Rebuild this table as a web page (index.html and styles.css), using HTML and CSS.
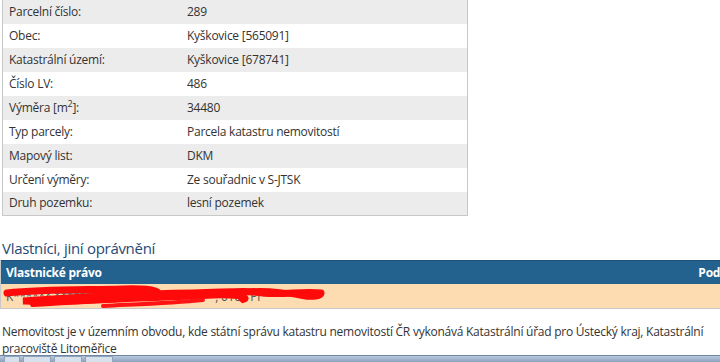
FILE: index.html
```html
<!DOCTYPE html>
<html lang="cs">
<head>
<meta charset="utf-8">
<link rel="stylesheet" href="styles.css">
</head>
<body>
<div class="page">
  <table class="info">
    <tr class="odd"><td class="lbl">Parcelní číslo:</td><td>289</td></tr>
    <tr><td class="lbl">Obec:</td><td>Kyškovice [565091]</td></tr>
    <tr class="odd"><td class="lbl">Katastrální území:</td><td>Kyškovice [678741]</td></tr>
    <tr><td class="lbl">Číslo LV:</td><td>486</td></tr>
    <tr class="odd"><td class="lbl">Výměra [m<sup>2</sup>]:</td><td>34480</td></tr>
    <tr><td class="lbl">Typ parcely:</td><td>Parcela katastru nemovitostí</td></tr>
    <tr class="odd"><td class="lbl">Mapový list:</td><td>DKM</td></tr>
    <tr><td class="lbl">Určení výměry:</td><td>Ze souřadnic v S-JTSK</td></tr>
    <tr class="odd"><td class="lbl">Druh pozemku:</td><td>lesní pozemek</td></tr>
  </table>

  <h2 class="heading">Vlastníci, jiní oprávnění</h2>
  <div class="owners">
    <div class="owners-head"><span>Vlastnické právo</span><span class="share">Podíl</span></div>
    <div class="owners-row">
      <span class="owner-text">K****** ****** ***, 13*** ****** ***, 0100 Pr*****</span>
      <svg class="scribble" width="330" height="26" viewBox="0 0 330 26">
        <path d="M4 9 C40 5 80 6 120 5 C150 4 170 9 140 12 C110 16 60 18 20 17 C60 14 120 10 190 9 C230 8 240 6 260 9 C280 11 300 7 318 9" stroke="#ff0a0a" stroke-width="7" fill="none" stroke-linecap="round"/>
        <path d="M30 20 C90 16 150 14 200 12 C230 10 250 13 240 16 C225 6 260 4 300 12 C310 14 318 12 318 10" stroke="#ff0a0a" stroke-width="6" fill="none" stroke-linecap="round"/>
        <path d="M100 22 C140 20 170 19 200 16" stroke="#ff1414" stroke-width="4" fill="none" stroke-linecap="round"/>
      </svg>
    </div>
  </div>

  <p class="note">Nemovitost je v územním obvodu, kde státní správu katastru nemovitostí ČR vykonává Katastrální úřad pro Ústecký kraj, Katastrální pracoviště Litoměřice</p>
</div>
<div class="taskbar">
  <span class="tb-btn start"></span>
  <span class="tb-btn"></span>
  <span class="tb-btn"></span>
  <span class="tb-btn"></span>
</div>
</body>
</html>
```

FILE: styles.css
```css
html, body {
  margin: 0;
  padding: 0;
  background: #fff;
  overflow: hidden;
}
body {
  width: 720px;
  height: 362px;
  font-family: "Open Sans", "Noto Sans", sans-serif;
  font-size: 12px;
  letter-spacing: -0.25px;
  color: #333;
  position: relative;
}
.page {
  height: 356px;
  overflow: hidden;
}
.info {
  margin: -1px 0 0 2px;
  width: 466px;
  border-collapse: collapse;
  border: 1px solid #c8c8c8;
}
.info tr { height: 24px; background: #fff; }
.info tr.odd { background: #ececec; }
.info td {
  padding: 0 0 0 6px;
  vertical-align: middle;
  line-height: 16px;
  white-space: nowrap;
}
.info td.lbl { width: 172px; }
.info sup { font-size: 9px; line-height: 0; }

.heading {
  margin: 21px 0 0 2px;
  font-size: 15px;
  letter-spacing: -0.3px;
  font-weight: normal;
  color: #1f4b75;
  line-height: 22px;
  height: 23px;
}
.owners {
  border-left: 1px solid #c8c8c8;
  width: 740px;
}
.owners-head {
  background: #23618f;
  color: #fff;
  font-weight: bold;
  height: 23px;
  display: flex;
  align-items: center;
  padding-left: 5px;
  border-top: 1px solid #1b4f78;
}
.owners-head .share { margin-left: auto; margin-right: 14px; }
.owners-row {
  background: #fcdcb0;
  height: 24px;
  border-bottom: 1px solid #c8c8c8;
  position: relative;
  display: flex;
  align-items: center;
  padding-left: 5px;
  color: #555;
}
.scribble {
  position: absolute;
  left: 2px;
  top: 0;
}
.note {
  margin: 14px 0 0 2px;
  line-height: 17px;
  width: 718px;
}
.taskbar {
  position: absolute;
  left: 0;
  right: 0;
  bottom: 0;
  height: 6px;
  background: linear-gradient(#b9c9dc, #8aa3bf);
  border-top: 1px solid #6f87a3;
  display: flex;
  gap: 3px;
  padding-left: 4px;
}
.tb-btn {
  width: 26px;
  height: 6px;
  background: #d7e1ec;
  border: 1px solid #8fa3ba;
  border-bottom: none;
}
.tb-btn.start { width: 14px; }
```
